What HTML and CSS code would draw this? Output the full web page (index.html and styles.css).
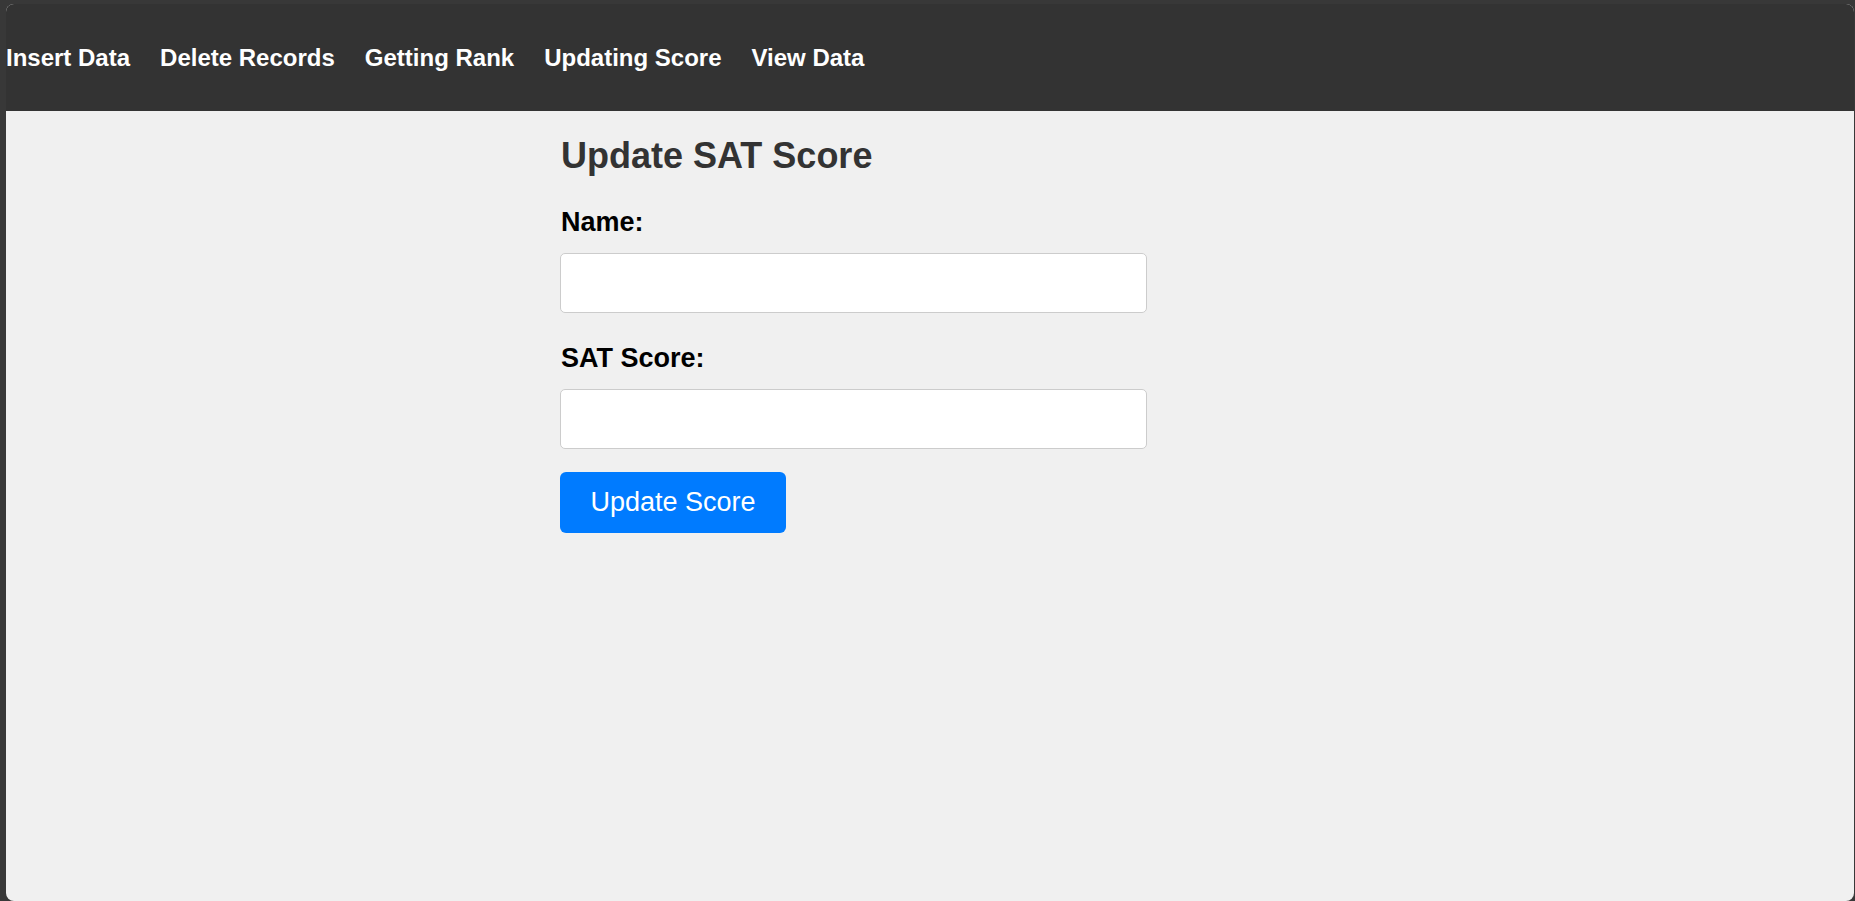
FILE: index.html
```html
<!DOCTYPE html>
<html lang="en">
<head>
<meta charset="utf-8">
<title>Update SAT Score</title>
<link rel="stylesheet" href="styles.css">
</head>
<body>
<div class="window">
  <nav class="navbar">
    <a class="nav-link" href="#">Insert Data</a>
    <a class="nav-link" href="#">Delete Records</a>
    <a class="nav-link" href="#">Getting Rank</a>
    <a class="nav-link" href="#">Updating Score</a>
    <a class="nav-link" href="#">View Data</a>
  </nav>
  <main class="content">
    <div class="container">
      <h2 class="title">Update SAT Score</h2>
      <form class="form">
        <label class="label label-first" for="name">Name:</label>
        <input class="field" id="name" type="text">
        <label class="label" for="score">SAT Score:</label>
        <input class="field" id="score" type="text">
        <button class="btn" type="button">Update Score</button>
      </form>
    </div>
  </main>
</div>
</body>
</html>
```
FILE: styles.css
```css
html, body {
  margin: 0;
  padding: 0;
  height: 100%;
}
body {
  background: #383838;
  font-family: "Liberation Sans", Arial, sans-serif;
  padding: 4px 1px 0 6px;
  box-sizing: border-box;
  overflow: hidden;
}
.window {
  height: 100%;
  background: #f0f0f0;
  border-radius: 8px;
  overflow: hidden;
  display: flex;
  flex-direction: column;
}
.navbar {
  background: #333333;
  height: 107px;
  display: flex;
  align-items: center;
  gap: 30px;
  padding-top: 1px;
  box-sizing: border-box;
}
.nav-link {
  color: #ffffff;
  text-decoration: none;
  font-weight: bold;
  font-size: 24px;
}
.content {
  flex: 1;
}
.container {
  width: 740px;
  margin: 0 auto;
}
.title {
  margin: 24px 0 0 1px;
  font-size: 36px;
  line-height: 41px;
  color: #333333;
  font-weight: bold;
}
.form {
  display: flex;
  flex-direction: column;
  align-items: flex-start;
}
.label {
  font-size: 27px;
  font-weight: bold;
  color: #000000;
  line-height: 30px;
  margin-top: 30px;
  margin-left: 1px;
}
.label-first {
  margin-top: 31px;
}
.field {
  margin-top: 16px;
  width: 587px;
  height: 60px;
  box-sizing: border-box;
  border: 1px solid #cccccc;
  border-radius: 5px;
  background: #ffffff;
  font-size: 20px;
  padding: 0 12px;
}
.btn {
  margin-top: 23px;
  width: 226px;
  height: 61px;
  background: #007bff;
  color: #ffffff;
  border: none;
  border-radius: 6px;
  font-family: "Liberation Sans", Arial, sans-serif;
  font-size: 27px;
  padding: 0;
}
```
